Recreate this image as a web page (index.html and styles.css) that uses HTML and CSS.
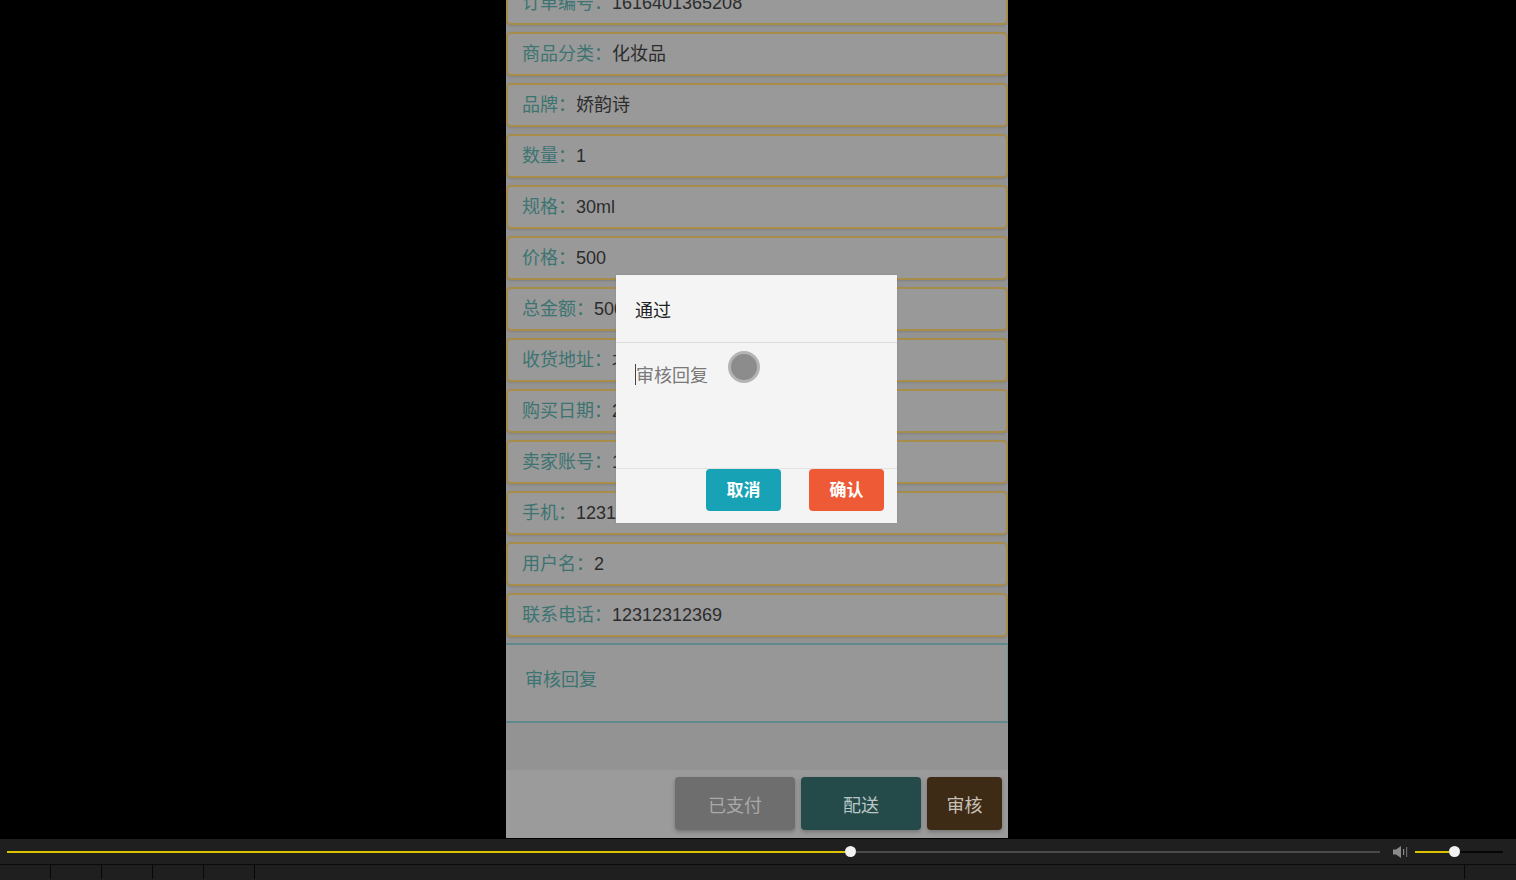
FILE: index.html
```html
<!DOCTYPE html>
<html lang="zh-CN">
<head>
<meta charset="utf-8">
<title>订单详情</title>
<link rel="stylesheet" href="styles.css">
</head>
<body>
<div class="stage">
  <div class="phone">
    <div class="list">
      <div class="row"><span class="label">订单编号：</span><span class="value">1616401365208</span></div>
      <div class="row"><span class="label">商品分类：</span><span class="value">化妆品</span></div>
      <div class="row"><span class="label">品牌：</span><span class="value">娇韵诗</span></div>
      <div class="row"><span class="label">数量：</span><span class="value">1</span></div>
      <div class="row"><span class="label">规格：</span><span class="value">30ml</span></div>
      <div class="row"><span class="label">价格：</span><span class="value">500</span></div>
      <div class="row"><span class="label">总金额：</span><span class="value">500</span></div>
      <div class="row"><span class="label">收货地址：</span><span class="value">北京市</span></div>
      <div class="row"><span class="label">购买日期：</span><span class="value">2021-03-22</span></div>
      <div class="row"><span class="label">卖家账号：</span><span class="value">1</span></div>
      <div class="row"><span class="label">手机：</span><span class="value">12312312369</span></div>
      <div class="row"><span class="label">用户名：</span><span class="value">2</span></div>
      <div class="row"><span class="label">联系电话：</span><span class="value">12312312369</span></div>
    </div>
    <div class="reply">审核回复</div>
    <div class="spacer"></div>
    <div class="actions">
      <button class="btn btn-paid">已支付</button>
      <button class="btn btn-ship">配送</button>
      <button class="btn btn-audit">审核</button>
    </div>

    <div class="modal">
      <div class="modal-title">通过</div>
      <div class="modal-body"><span class="caret"></span><span class="placeholder">审核回复</span></div>
      <div class="modal-foot">
        <button class="mbtn mbtn-cancel">取消</button>
        <button class="mbtn mbtn-ok">确认</button>
      </div>
    </div>
    <div class="touch"></div>
  </div>
</div>
<div class="player">
  <div class="track-row">
    <div class="progress">
      <div class="played"></div>
      <div class="thumb"></div>
      <div class="rest"></div>
    </div>
    <svg class="vol-icon" width="15" height="12" viewBox="0 0 15 12">
      <path d="M0 3.5 H3 L8 0 V12 L3 8.5 H0 Z" fill="#8a8a8a"/>
      <rect x="10" y="3" width="1.2" height="6" fill="#8a8a8a"/>
      <rect x="13" y="1" width="1.2" height="10" fill="#6a6a6a"/>
    </svg>
    <div class="volume">
      <div class="vol-played"></div>
      <div class="thumb"></div>
      <div class="vol-rest"></div>
    </div>
  </div>
  <div class="tab-row">
    <div class="tab"></div><div class="tab"></div><div class="tab"></div><div class="tab"></div><div class="tab"></div>
    <div class="tab-fill"></div>
    <div class="tab tab-end"></div>
  </div>
</div>
</body>
</html>
```

FILE: styles.css
```css
* { box-sizing: border-box; }
html, body { margin: 0; padding: 0; background: #000; }
body { font-family: "Noto Sans CJK SC", "Noto Sans", sans-serif; width: 1516px; height: 880px; overflow: hidden; }

.stage { height: 839px; background: #000; }
.phone {
  position: relative;
  width: 502px;
  height: 838px;
  margin-left: 506px;
  background: #939393;
  overflow: hidden;
  display: flex;
  flex-direction: column;
}

.list { display: flex; flex-direction: column; gap: 7px; margin-top: -19px; }
.row {
  height: 44px;
  flex: none;
  border: 2px solid #a88c4a;
  border-radius: 5px;
  background: #999999;
  padding-left: 14px;
  font-family: "Liberation Sans", "Noto Sans CJK SC", sans-serif;
  font-size: 18px;
  line-height: 40px;
  white-space: nowrap;
  box-shadow: 0 1px 2px rgba(0,0,0,0.12);
}
.label { color: #3c7471; }
.value { color: #2c2c2c; }

.reply {
  margin-top: 6px;
  height: 80px;
  flex: none;
  border-top: 2px solid #5f8a89;
  border-bottom: 2px solid #5f8a89;
  border-right: 1px solid #6f9594;
  background: #979797;
  color: #3c7471;
  font-size: 18px;
  padding: 21px 0 0 19px;
  line-height: 24px;
}
.spacer { height: 47px; flex: none; background: #939393; }
.actions {
  flex: 1;
  background: #9b9b9b;
  display: flex;
  justify-content: flex-end;
  align-items: flex-start;
  gap: 6px;
  padding: 7px 6px 0 0;
}
.btn {
  border: none;
  border-radius: 4px;
  height: 53px;
  font-family: "Noto Sans CJK SC", sans-serif;
  font-size: 18px;
  box-shadow: 0 2px 4px rgba(0,0,0,0.25);
  padding: 0;
}
.btn-paid { width: 120px; background: #6e6e6e; color: #a9a9a9; }
.btn-ship { width: 120px; background: #244b4a; color: #b9c6c5; }
.btn-audit { width: 75px; background: #3e2b15; color: #c6c0b8; }

.modal {
  position: absolute;
  left: 110px;
  top: 275px;
  width: 281px;
  height: 248px;
  background: #f4f4f4;
  display: flex;
  flex-direction: column;
  box-shadow: 0 0 2px rgba(0,0,0,0.1);
}
.modal-title {
  height: 68px;
  border-bottom: 1px solid #dcdcdc;
  padding-left: 19px;
  display: flex;
  align-items: center;
  font-size: 18px;
  color: #222;
}
.modal-body {
  height: 126px;
  border-bottom: 1px solid #e2e2e2;
  padding: 19px 0 0 19px;
  font-size: 18px;
  line-height: 24px;
  display: flex;
  align-items: flex-start;
}
.caret { width: 1px; height: 21px; background: #444; margin-top: 2px; }
.placeholder { color: #7a7a7a; }
.modal-foot {
  display: flex;
  justify-content: flex-end;
  gap: 28px;
  padding: 0 13px 0 0;
}
.mbtn {
  width: 75px;
  height: 42px;
  border: none;
  border-radius: 4px;
  color: #fff;
  font-family: "Noto Sans CJK SC", sans-serif;
  font-weight: bold;
  font-size: 17px;
  padding: 0 0 3px;
}
.mbtn-cancel { background: #17a3b5; }
.mbtn-ok { background: #ee5a36; }

.touch {
  position: absolute;
  left: 222px;
  top: 351px;
  width: 32px;
  height: 32px;
  border-radius: 50%;
  background: #8c8c8c;
  border: 3px solid #b4b4b4;
}

.player { height: 41px; background: #1f1f1f; }
.track-row {
  height: 26px;
  display: flex;
  align-items: center;
  padding-left: 7px;
  border-bottom: 1px solid #0b0b0b;
}
.progress { display: flex; align-items: center; width: 1373px; }
.played { width: 838px; height: 2px; background: #dcc300; }
.thumb { width: 11px; height: 11px; border-radius: 50%; background: #f2f2f2; flex: none; }
.rest { flex: 1; height: 2px; background: #4a4a4a; }
.vol-icon { margin-left: 13px; }
.volume { display: flex; align-items: center; width: 88px; margin-left: 7px; }
.vol-played { width: 34px; height: 2px; background: #dcc300; }
.vol-rest { flex: 1; height: 2px; background: #060606; }

.tab-row { height: 14px; display: flex; }
.tab { width: 51px; border-right: 1px solid #080808; flex: none; }
.tab-fill { flex: 1; border-right: 1px solid #080808; width: 1210px; flex: none; }
.tab-end { border-right: none; flex: 1; }
```
